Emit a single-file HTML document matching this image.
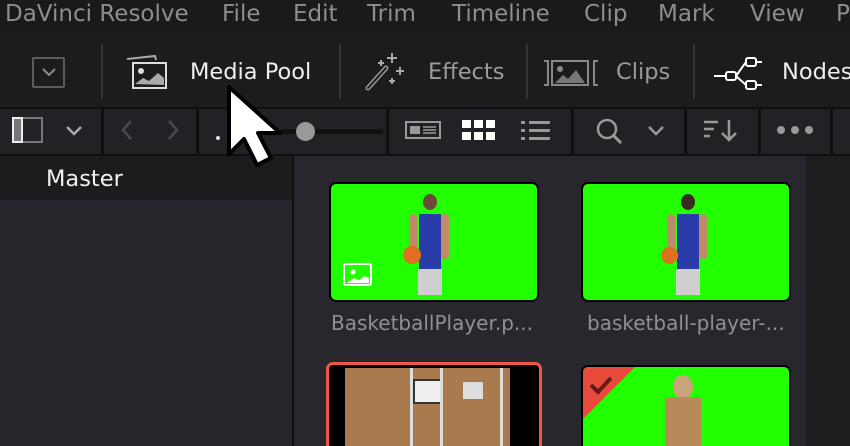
<!DOCTYPE html>
<html><head><style>
*{margin:0;padding:0;box-sizing:border-box}
html,body{width:850px;height:446px;overflow:hidden}
body{background:#1c1c1f;font-family:"DejaVu Sans","Liberation Sans",sans-serif;position:relative}
.a{position:absolute}
.menu{top:0;left:0;width:850px;height:33px;background:#1a1a1c;color:#8d8d92;font-size:23px}
.menu span{position:absolute;top:1px}
.tb{top:33px;left:0;width:850px;height:74px;background:#1c1c1f}
.tb2{top:107px;left:0;width:850px;height:49px;background:#222226;border-top:2px solid #0f0f10;border-bottom:2px solid #0f0f10}
.sep{background:#333338;width:2px}
.vs{background:#0f0f10;width:3px;top:107px;height:49px}
.lbl{font-size:22.5px;color:#eee}
.card{position:absolute;border:2px solid #000;border-radius:7px;background:#22ff00;overflow:hidden}
.cap{position:absolute;font-size:20px;color:#8f9096}
</style></head><body>
<div class="a menu">
<span style="left:5px">DaVinci Resolve</span><span style="left:222px">File</span><span style="left:293px">Edit</span><span style="left:367px">Trim</span><span style="left:452px">Timeline</span><span style="left:584px">Clip</span><span style="left:658px">Mark</span><span style="left:750px">View</span><span style="left:836px">P</span>
</div>
<div class="a tb"></div>
<div class="a" style="left:32px;top:57px;width:33px;height:31px;border:2px solid #5a5a5f;border-radius:2px"></div>
<svg class="a" style="left:40px;top:65px" width="18" height="14"><path d="M3 4l6 6 6-6" stroke="#8a8a8f" stroke-width="2" fill="none"/></svg>
<div class="a sep" style="left:101px;top:44px;height:55px"></div>
<svg class="a" style="left:124px;top:53px" width="45" height="36"><path d="M3 6l28-3 1 4" stroke="#aaa" stroke-width="2" fill="none"/><rect x="9" y="10" width="33" height="25" fill="none" stroke="#ddd" stroke-width="2"/><circle cx="17" cy="18" r="3" fill="#ddd"/><path d="M11 31l8-6 6 3 9-8 6 5v7z" fill="#aaa"/></svg>
<div class="a lbl" style="left:190px;top:59px">Media Pool</div>
<div class="a sep" style="left:339px;top:44px;height:55px"></div>
<svg class="a" style="left:364px;top:50px" width="45" height="42"><path d="M4 38l18-20" stroke="#999" stroke-width="5" stroke-linecap="round"/><path d="M4 38l18-20" stroke="#1c1c1f" stroke-width="2" stroke-linecap="round"/><path d="M28 3v10M23 8h10M36 17v8M32 21h8M28 28v6M25 31h6M17 10v6M14 13h6" stroke="#aaa" stroke-width="2"/></svg>
<div class="a lbl" style="left:428px;top:59px;color:#9a9a9f">Effects</div>
<div class="a sep" style="left:526px;top:44px;height:55px"></div>
<svg class="a" style="left:542px;top:59px" width="58" height="28"><path d="M2 2h4v24H2M56 2h-4v24h4" stroke="#888" stroke-width="2" fill="none"/><rect x="10" y="2" width="36" height="24" fill="none" stroke="#888" stroke-width="2"/><circle cx="18" cy="10" r="3" fill="#888"/><path d="M13 24l8-8 5 4 8-9 9 13z" fill="#777"/></svg>
<div class="a lbl" style="left:616px;top:59px;color:#9a9a9f">Clips</div>
<div class="a sep" style="left:693px;top:44px;height:55px"></div>
<svg class="a" style="left:712px;top:52px" width="50" height="38"><g stroke="#fff" stroke-width="2" fill="none"><rect x="14" y="20" width="10" height="8" rx="2"/><rect x="34" y="6" width="10" height="8" rx="2"/><rect x="34" y="29" width="10" height="8" rx="2"/><path d="M2 24h12M24 24l10-14M24 24l10 9M44 10h6M44 33h6"/></g></svg>
<div class="a lbl" style="left:782px;top:59px">Nodes</div>
<div class="a tb2"></div>
<div class="a vs" style="left:101px"></div><div class="a vs" style="left:196px"></div><div class="a vs" style="left:386px"></div><div class="a vs" style="left:571px"></div><div class="a vs" style="left:684px"></div><div class="a vs" style="left:758px"></div><div class="a vs" style="left:830px"></div>
<div class="a" style="left:12px;top:117px;width:31px;height:26px;border:2px solid #777"></div>
<div class="a" style="left:12px;top:117px;width:11px;height:26px;border:2px solid #eee;background:#777"></div>
<svg class="a" style="left:64px;top:124px" width="20" height="14"><path d="M3 3l7 7 7-7" stroke="#aaa" stroke-width="2.5" fill="none"/></svg>
<svg class="a" style="left:120px;top:118px" width="60" height="24"><path d="M11 3l-8 9 8 9M49 3l8 9-8 9" stroke="#4a4a4f" stroke-width="2.5" fill="none"/></svg>
<div class="a" style="left:216px;top:136px;width:4px;height:4px;background:#ddd;border-radius:2px"></div>
<div class="a" style="left:280px;top:129px;width:103px;height:5px;background:#111;border-radius:3px"></div>
<div class="a" style="left:296px;top:122px;width:19px;height:19px;background:#999;border-radius:50%"></div>
<svg class="a" style="left:404px;top:120px" width="38" height="20"><rect x="2" y="2" width="34" height="16" fill="none" stroke="#999" stroke-width="2"/><rect x="6" y="6" width="10" height="8" fill="#999"/><path d="M19 7h13M19 10h13M19 13h13" stroke="#999" stroke-width="1.5"/></svg>
<svg class="a" style="left:462px;top:120px" width="34" height="22"><g fill="#fff"><rect x="0" y="0" width="9" height="8"/><rect x="12" y="0" width="9" height="8"/><rect x="24" y="0" width="9" height="8"/><rect x="0" y="12" width="9" height="8"/><rect x="12" y="12" width="9" height="8"/><rect x="24" y="12" width="9" height="8"/></g></svg>
<svg class="a" style="left:521px;top:120px" width="30" height="22"><g fill="#999"><rect x="0" y="1" width="4" height="3"/><rect x="0" y="9" width="4" height="3"/><rect x="0" y="17" width="4" height="3"/><rect x="8" y="1" width="21" height="3"/><rect x="8" y="9" width="21" height="3"/><rect x="8" y="17" width="21" height="3"/></g></svg>
<svg class="a" style="left:594px;top:116px" width="36" height="30"><circle cx="13" cy="13" r="9" stroke="#999" stroke-width="2.5" fill="none"/><path d="M20 20l7 7" stroke="#999" stroke-width="3"/></svg>
<svg class="a" style="left:646px;top:124px" width="20" height="14"><path d="M3 3l7 7 7-7" stroke="#999" stroke-width="2.5" fill="none"/></svg>
<svg class="a" style="left:702px;top:118px" width="38" height="26"><path d="M2 4h14M2 11h10M2 18h6M27 2v20M20 15l7 7 7-7" stroke="#999" stroke-width="2.5" fill="none"/></svg>
<svg class="a" style="left:776px;top:124px" width="40" height="12"><g fill="#999"><circle cx="5" cy="6" r="4"/><circle cx="19" cy="6" r="4"/><circle cx="33" cy="6" r="4"/></g></svg>
<div class="a" style="left:0;top:156px;width:292px;height:290px;background:#27262c"></div>
<div class="a" style="left:0;top:156px;width:292px;height:44px;background:#1c1c1f"></div>
<div class="a" style="left:46px;top:166px;font-size:22.5px;color:#f2f2f2">Master</div>
<div class="a" style="left:292px;top:156px;width:2px;height:290px;background:#0f0f10"></div>
<div class="a" style="left:294px;top:156px;width:512px;height:290px;background:#28272d"></div>
<div class="a" style="left:806px;top:156px;width:44px;height:290px;background:#1e1e21"></div>
<div class="card" style="left:329px;top:182px;width:210px;height:120px">
 <div class="a" style="left:92px;top:10px;width:14px;height:16px;background:#6b4a3a;border-radius:50%"></div>
 <div class="a" style="left:78px;top:30px;width:8px;height:45px;background:#c08a6a;border-radius:4px"></div>
 <div class="a" style="left:110px;top:30px;width:8px;height:45px;background:#c08a6a;border-radius:4px"></div>
 <div class="a" style="left:88px;top:30px;width:22px;height:55px;background:#2a3caa"></div>
 <div class="a" style="left:87px;top:85px;width:24px;height:26px;background:#cfcfcf"></div>
 <div class="a" style="left:72px;top:62px;width:18px;height:18px;background:#e07020;border-radius:50%"></div>
 <div class="a" style="left:12px;top:79px;width:29px;height:23px;border:2px solid #fff;border-radius:3px"></div>
 <svg class="a" style="left:16px;top:83px" width="22" height="16"><circle cx="6" cy="5" r="2.5" fill="#fff"/><path d="M0 16l7-5 5 2 6-4 4 2v5z" fill="#fff"/></svg>
</div>
<div class="cap" style="left:331px;top:311px">BasketballPlayer.p...</div>
<div class="card" style="left:581px;top:182px;width:210px;height:120px">
 <div class="a" style="left:98px;top:10px;width:14px;height:16px;background:#3a2a22;border-radius:50%"></div>
 <div class="a" style="left:84px;top:30px;width:8px;height:45px;background:#c08a6a;border-radius:4px"></div>
 <div class="a" style="left:116px;top:30px;width:8px;height:45px;background:#c08a6a;border-radius:4px"></div>
 <div class="a" style="left:94px;top:30px;width:22px;height:55px;background:#2a3caa"></div>
 <div class="a" style="left:93px;top:85px;width:24px;height:26px;background:#cfcfcf"></div>
 <div class="a" style="left:78px;top:63px;width:17px;height:17px;background:#e07020;border-radius:50%"></div>
</div>
<div class="cap" style="left:587px;top:311px">basketball-player-...</div>
<div class="a" style="left:326px;top:362px;width:216px;height:90px;border:3px solid #f05545;border-radius:7px;background:#000"></div>
<div class="a" style="left:345px;top:368px;width:165px;height:80px;background:#a87a4e"></div>
<div class="a" style="left:413px;top:379px;width:29px;height:25px;background:#eee;border:2px solid #333"></div>
<div class="a" style="left:463px;top:382px;width:20px;height:17px;background:#ddd"></div>
<div class="a" style="left:410px;top:368px;width:3px;height:80px;background:#ddd"></div>
<div class="a" style="left:440px;top:368px;width:3px;height:80px;background:#ddd"></div>
<div class="a" style="left:500px;top:368px;width:3px;height:80px;background:#ddd"></div>
<div class="card" style="left:581px;top:365px;width:210px;height:90px">
 <svg class="a" style="left:0;top:0" width="60" height="60"><path d="M0 0h52L0 52z" fill="#e84a3c"/><path d="M8 18l7 7 13-14" stroke="#6a1a14" stroke-width="4" fill="none"/></svg>
 <div class="a" style="left:90px;top:8px;width:20px;height:24px;background:#c9a47a;border-radius:50%"></div>
 <div class="a" style="left:82px;top:30px;width:36px;height:60px;background:#b88a5a"></div>
</div>
<svg class="a" style="left:222px;top:82px" width="64" height="92"><path d="M7 5v67l15-15 13 26 14-7-13-25h22z" fill="#fff" stroke="#000" stroke-width="4" stroke-linejoin="round"/></svg>
</body></html>
